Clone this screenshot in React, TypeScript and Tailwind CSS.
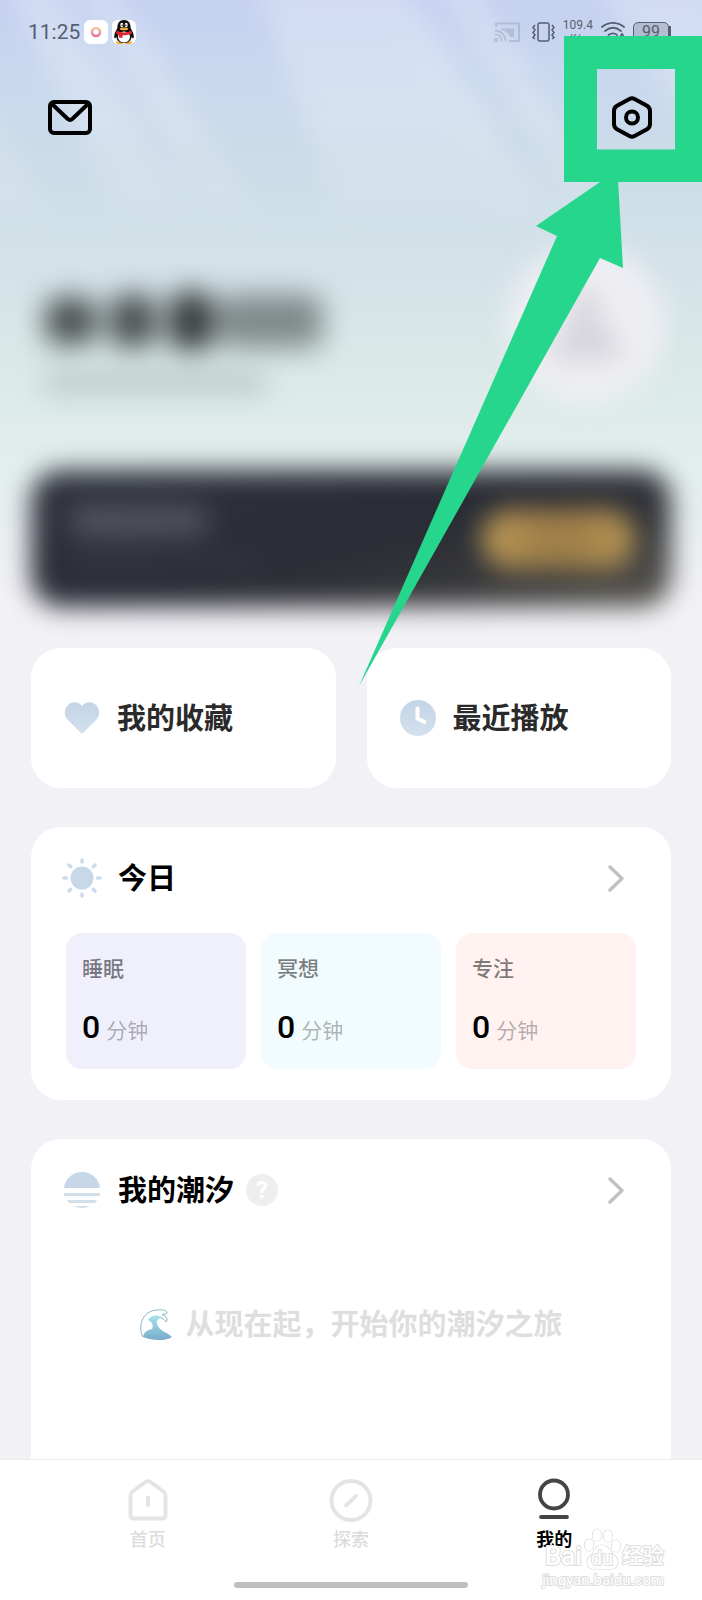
import type { ReactNode } from "react"

const stats = [
  { label: "睡眠", value: 0, className: "bg-[#f0effc]" },
  { label: "冥想", value: 0, className: "bg-[#f2fbfd]" },
  { label: "专注", value: 0, className: "bg-[#fff2f0]" },
]

function LightBeams() {
  return (
    <svg
      className="absolute inset-x-0 top-0 w-full h-[300px]"
      viewBox="0 0 702 300"
      preserveAspectRatio="none"
      aria-hidden="true"
    >
      <defs>
        <filter id="beamBlur" x="-20%" y="-20%" width="140%" height="140%">
          <feGaussianBlur stdDeviation="12" />
        </filter>
        <linearGradient id="beamFade" x1="0" y1="0" x2="0" y2="300" gradientUnits="userSpaceOnUse">
          <stop offset="0" stopColor="#fff" stopOpacity="0.22" />
          <stop offset="0.4" stopColor="#fff" stopOpacity="0.22" />
          <stop offset="0.8" stopColor="#fff" stopOpacity="0" />
        </linearGradient>
      </defs>
      <g fill="url(#beamFade)" filter="url(#beamBlur)">
        <path d="M5 -20H50L235 280H150Z" />
        <path d="M75 -20H108L300 280H245Z" />
        <path d="M255 -20H375L570 280H360Z" />
        <path d="M375 -20H400L600 280H550Z" />
        <path d="M435 -20H470L660 280H620Z" />
        <path d="M590 -20H720V160Z" />
        <path d="M-20 90L80 280H-20Z" />
      </g>
    </svg>
  )
}

function StatusBar() {
  return (
    <div className="relative flex h-16 items-center justify-between pl-7 pr-[31px] text-[#565f70]">
      <div className="flex items-center gap-1">
        <span className="text-[21px] leading-6">11:25</span>
        <span className="flex size-6 items-center justify-center rounded-md bg-white">
          <svg width="12" height="12" viewBox="0 0 12 12" aria-hidden="true">
            <defs>
              <linearGradient id="ring" x1="0" y1="0" x2="0" y2="1">
                <stop offset="0" stopColor="#f6c9a4" />
                <stop offset="1" stopColor="#e8709a" />
              </linearGradient>
            </defs>
            <circle cx="6" cy="6" r="4" fill="none" stroke="url(#ring)" strokeWidth="2.6" />
          </svg>
        </span>
        <span className="flex size-6 items-center justify-center rounded-md bg-white">
          <svg width="24" height="24" viewBox="0 0 24 24" aria-hidden="true">
            <ellipse cx="8" cy="22.6" rx="4" ry="1.5" fill="#f0ad3c" />
            <ellipse cx="16" cy="22.6" rx="4" ry="1.5" fill="#f0ad3c" />
            <path d="M12 0C7.500 0 5.200 3.200 5.400 8C3.800 11 1.800 14 2.200 17.500C2.400 19 3.600 18 4.400 17C5 21 8 23 12 23S19 21 19.600 17C20.400 18 21.600 19 21.800 17.500C22.200 14 20.200 11 18.600 8C18.800 3.200 16.500 0 12 0Z" fill="#111" />
            <ellipse cx="12" cy="17" rx="6" ry="5.500" fill="#fff" />
            <ellipse cx="9.800" cy="5" rx="1.500" ry="2.200" fill="#fff" />
            <ellipse cx="14.200" cy="5" rx="1.500" ry="2.200" fill="#fff" />
            <circle cx="10.200" cy="5.300" r=".7" />
            <circle cx="13.800" cy="5.300" r=".7" />
            <ellipse cx="12" cy="8.900" rx="4.200" ry="1.400" fill="#f0ad3c" />
            <path d="M4.600 10.500C9 13 15 13 19.400 10.500L20 13.500C17 15 14 15.300 10.500 15.200V18L7 17.500V14.800L4 13.500Z" fill="#df2430" />
          </svg>
        </span>
      </div>
      <div className="flex items-center">
        <svg className="mr-3 opacity-20" width="26" height="20" viewBox="0 0 26 20" fill="none" stroke="currentColor" strokeWidth="2" aria-hidden="true">
          <path d="M2 5V1.500H25V19H15" />
          <path d="M7 6.500H20V15H16C14 11 11 8.500 7 7.500Z" fill="currentColor" stroke="none" />
          <path d="M1 8.500C7 8.500 11.500 13 11.500 19M1 12.500C5 12.500 7.500 15 7.500 19M1 17H3V19H1Z" />
        </svg>
        <svg className="mr-2" width="23" height="20" viewBox="0 0 23 20" fill="none" stroke="currentColor" strokeWidth="1.500" aria-hidden="true">
          <rect x="6" y="1" width="11" height="18" rx="2" />
          <path d="M3 3L1 5.500L3 8L1 10.500L3 13L1 15.500L3 17M20 3L22 5.500L20 8L22 10.500L20 13L22 15.500L20 17" />
        </svg>
        <span className="mr-2 flex flex-col items-center text-xs leading-[14px]">
          <span>109.4</span>
          <span className="text-[10px]">K/s</span>
        </span>
        <svg className="mr-2" width="24" height="20" viewBox="0 0 24 20" fill="none" stroke="currentColor" strokeWidth="1.800" strokeLinecap="round" aria-hidden="true">
          <path d="M1 5C7.500 -.5 16.500 -.5 23 5M4 9C9 5 15 5 20 9M7.500 13C10.500 11 13.500 11 16 13" />
          <path d="M21 12L23 15H19Z" fill="currentColor" />
        </svg>
        <span className="flex items-center">
          <span className="flex h-[21px] w-9 items-center justify-center rounded-[5px] border border-current bg-[#565f70]/25 text-base leading-4">
            99
          </span>
          <span className="h-3 w-0.5 bg-current" />
        </span>
      </div>
    </div>
  )
}

function Chevron() {
  return (
    <svg width="16" height="27" viewBox="0 0 16 27" fill="none" stroke="#c1c1c1" strokeWidth="3.400" strokeLinecap="round" strokeLinejoin="round" aria-hidden="true">
      <path d="M2 2L14 13.500L2 25" />
    </svg>
  )
}

function Shortcut({ icon, children }: { icon: ReactNode; children: ReactNode }) {
  return (
    <button type="button" className="flex h-[140px] flex-1 items-center rounded-[30px] bg-white pl-8 text-[#2a2a2a]">
      {icon}
      <span className="ml-4 pt-0.5 text-[29px] leading-10 font-bold">{children}</span>
    </button>
  )
}

function CardHeader({ icon, title, extra }: { icon: ReactNode; title: string; extra?: ReactNode }) {
  return (
    <div className="flex h-[102px] items-center pl-[31px] pr-[47px]">
      {icon}
      <h2 className="ml-4 pt-0.5 text-[29px] leading-10 font-bold text-black">{title}</h2>
      {extra}
      <button type="button" aria-label={`查看${title}`} className="ml-auto">
        <Chevron />
      </button>
    </div>
  )
}

function NavItem({ icon, label, active }: { icon: ReactNode; label: string; active?: boolean }) {
  return (
    <a
      href="#"
      aria-current={active ? "page" : undefined}
      className={`flex flex-1 flex-col items-center ${active ? "text-[#444]" : "text-[#e4e4e4]"}`}
    >
      {icon}
      <span className={`mt-1 text-lg leading-7 ${active ? "font-bold text-black" : "font-medium text-[#dcdcdc]"}`}>{label}</span>
    </a>
  )
}

// green box and arrow that point at the settings button
function SettingsPointer() {
  return (
    <svg className="pointer-events-none absolute right-0 top-9" width="343" height="650" viewBox="359 36 343 650" fill="#26d68c" aria-hidden="true">
      <path fillRule="evenodd" d="M564 36H702V182H564ZM597 69V149.500H675V69Z" />
      <path d="M600 182L536 226L557 236L359 686L600 258L623 268L618 180Z" />
    </svg>
  )
}

function Watermark() {
  return (
    <div className="pointer-events-none absolute bottom-3 right-[38px] flex flex-col items-end text-white [-webkit-text-stroke:2px_#dedede] [paint-order:stroke_fill]">
      <div className="flex items-end">
        <span className="text-[26px] leading-7 font-medium">Bai</span>
        <span className="relative flex h-[42px] w-10 items-end justify-center">
          <svg className="absolute inset-0" width="40" height="42" viewBox="0 0 40 42" fill="#fff" stroke="#d4d4d4" strokeWidth="1.200" aria-hidden="true">
            <ellipse cx="7" cy="17" rx="4.500" ry="6" />
            <ellipse cx="15" cy="7" rx="4.500" ry="6" />
            <ellipse cx="26" cy="8" rx="4.500" ry="6" />
            <ellipse cx="34" cy="18" rx="4.500" ry="6" />
            <path d="M20 17C13 17 13 24 8 28C3 33 5 41 12 41H29C36 41 38 33 33 28C28 24 27 17 20 17Z" />
          </svg>
          <span className="relative text-xl leading-6">du</span>
        </span>
        <span className="text-[21px] leading-7 font-medium">经验</span>
      </div>
      <span className="mt-0.5 text-[15px] leading-4">jingyan.baidu.com</span>
    </div>
  )
}

export default function App() {
  return (
    <div className="relative flex min-h-screen flex-col overflow-hidden bg-[#f2f1f6] font-[Roboto,'Noto_Sans_CJK_SC',sans-serif]">
      <div className="absolute inset-x-0 top-0 h-[620px] bg-[linear-gradient(to_bottom,#c5d1f0_0px,#c9d8ee_80px,#cbdbe9_150px,#d0e0e8_220px,#d5e3e9_280px,#d8e7e7_340px,#e0edeb_440px,#f2f1f6_600px)]" />
      <LightBeams />

      <StatusBar />

      <header className="relative flex h-[106px] items-center justify-between pl-12 pr-[50px]">
        <button type="button" aria-label="消息">
          <svg width="44" height="35" viewBox="0 0 44 35" fill="none" stroke="#000" strokeWidth="4" strokeLinejoin="round" aria-hidden="true">
            <rect x="2" y="2" width="40" height="31" rx="4" />
            <path d="M4 4L19.500 18.800Q22 21 24.500 18.800L40 4" />
          </svg>
        </button>
        <button type="button" aria-label="设置">
          <svg width="40" height="43" viewBox="0 0 40 43" fill="none" stroke="#000" strokeWidth="4" strokeLinejoin="round" aria-hidden="true">
            <path d="M17.500 2.900Q20 1.500 22.500 2.900L35 9.800Q38 11.500 38 15V28Q38 31.500 35 33.200L22.500 40.100Q20 41.500 17.500 40.100L5 33.200Q2 31.500 2 28V15Q2 11.500 5 9.800Z" />
            <circle cx="20" cy="21.500" r="6" />
          </svg>
        </button>
      </header>

      <section className="relative mt-[75px] flex h-40 items-center justify-between pl-[45px] pr-9" aria-hidden="true">
        <div className="mt-9 flex flex-col gap-5">
          <div className="flex items-center gap-3 blur-[14px]">
            <span className="h-12 w-[52px] rounded-2xl bg-black/65" />
            <span className="h-[54px] w-12 rounded-2xl bg-black/65" />
            <span className="h-[60px] w-11 rounded-2xl bg-black/75" />
            <span className="-ml-2 h-[54px] w-[106px] rounded-2xl bg-black/40" />
          </div>
          <div className="h-6 w-[220px] bg-[#889894]/35 blur-[13px]" />
        </div>
        <div className="flex size-40 items-center justify-center rounded-full bg-[#eeeef3] blur-[13px]">
          <svg width="80" height="80" viewBox="0 0 80 80" className="blur-[4px]">
            <path d="M40 4C56 4 56 24 50 36C60 44 74 54 76 74H4C6 54 20 44 30 36C24 24 24 4 40 4Z" fill="#d3d3da" />
          </svg>
        </div>
      </section>

      <section
        className="relative mx-[31px] mt-[65px] flex h-[137px] items-center justify-between rounded-[30px] bg-[linear-gradient(165deg,#30333e_0%,#292c35_50%,#35363a_72%,#5a5850_100%)] pl-10 pr-9 blur-[13px]"
        aria-hidden="true"
      >
        <div className="flex flex-col gap-5">
          <div className="h-7 w-[136px] rounded-lg bg-white/20 blur-[6px]" />
          <div className="h-4 w-[190px] bg-white/5 blur-[4px]" />
        </div>
        <div className="h-[60px] w-[154px] rounded-full bg-[linear-gradient(to_right,#bd9a57,#a08049_40%,#a08049_60%,#b99655)]" />
      </section>

      <div className="relative mx-[31px] mt-[41px] flex gap-[31px]">
        <Shortcut
          icon={
            <svg width="38" height="38" viewBox="0 0 38 38" aria-hidden="true">
              <defs>
                <linearGradient id="pale" x1="0" y1="0" x2="0" y2="1">
                  <stop offset="0" stopColor="#c3d4e7" />
                  <stop offset="1" stopColor="#d3e1ec" />
                </linearGradient>
              </defs>
              <path d="M19 35L4.500 20.500C1 17 .8 10 5 6C9 2.200 15.500 2.500 19 7C22.500 2.500 29 2.200 33 6C37.200 10 37 17 33.500 20.500Z" fill="url(#pale)" />
            </svg>
          }
        >
          我的收藏
        </Shortcut>
        <Shortcut
          icon={
            <svg width="38" height="38" viewBox="0 0 38 38" fill="none" aria-hidden="true">
              <circle cx="19" cy="19" r="18" fill="url(#pale)" />
              <path d="M18.500 9.500V19.500L25.500 23" stroke="#fff" strokeWidth="4" strokeLinecap="round" strokeLinejoin="round" />
            </svg>
          }
        >
          最近播放
        </Shortcut>
      </div>

      <section className="relative mx-[31px] mt-[39px] rounded-[30px] bg-white pb-[31px]">
        <CardHeader
          title="今日"
          icon={
            <svg width="40" height="40" viewBox="0 0 40 40" fill="#c7d8e8" stroke="#cddceb" strokeWidth="3.500" strokeLinecap="round" aria-hidden="true">
              <circle cx="20" cy="20" r="11.500" stroke="none" />
              <path d="M20 2V4M20 36V38M2 20H4.500M35.500 20H38M7 7L8.700 8.700M31.300 31.300L33 33M33 7L31.300 8.700M8.700 31.300L7 33" />
            </svg>
          }
        />
        <div className="mt-1 grid grid-cols-3 gap-[15px] px-[35px]">
          {stats.map((item) => (
            <div key={item.label} className={`h-[136px] rounded-2xl px-4 pt-5 ${item.className}`}>
              <p className="text-[21px] leading-8 font-medium text-black/50">{item.label}</p>
              <p className="mt-6 flex items-baseline gap-1.5 leading-9">
                <span className="text-[32px] font-medium text-black">{item.value}</span>
                <span className="text-[21px] text-black/30">分钟</span>
              </p>
            </div>
          ))}
        </div>
      </section>

      <section className="relative mx-[31px] mt-[39px] flex-1 rounded-t-[30px] bg-white">
        <CardHeader
          title="我的潮汐"
          icon={
            <svg width="40" height="40" viewBox="0 0 40 40" fill="#c7d7e8" aria-hidden="true">
              <path d="M2 18C3 9 10 2 20 2S37 9 38 18Z" />
              <path d="M2 23H38L37.500 26H2.500ZM5 30H35L33 33H7ZM12 36H28Q20 40 12 36Z" fill="#d0dfea" />
            </svg>
          }
          extra={
            <button type="button" aria-label="说明" className="ml-3 flex size-8 items-center justify-center rounded-full bg-[#eee] text-2xl leading-8 font-bold text-white">
              ?
            </button>
          }
        />
        <div className="mt-16 flex items-center justify-center gap-3">
          <svg width="34" height="32" viewBox="0 0 34 32" aria-hidden="true">
            <defs>
              <linearGradient id="wave" x1="0" y1="0" x2="0" y2="1">
                <stop offset="0" stopColor="#a6e2ef" />
                <stop offset="1" stopColor="#78abc9" />
              </linearGradient>
            </defs>
            <path d="M4 28C-1 19 2 2 18 1C22 .5 27 1 28 3C29 6 24 4 23 6C28 6 29 11 27 13C23 8 19 7 17 10" fill="#fff" stroke="#86b4c8" />
            <path d="M9 11C13 5 21 6 24 9C19 9 17 12 18 15C20 22 28 23 33 28C26 33 12 31 4 28C5 23 8 21 13 20C15 16 13 13 9 11Z" fill="url(#wave)" />
          </svg>
          <p className="text-[29px] leading-10 font-bold text-[#dedede]">从现在起，开始你的潮汐之旅</p>
        </div>
      </section>

      <nav className="relative flex h-[141px] flex-col border-t border-[#ececec] bg-white px-[46px] pt-[18px]">
        <div className="flex">
          <NavItem
            label="首页"
            icon={
              <svg width="44" height="44" viewBox="0 0 44 44" fill="none" stroke="currentColor" strokeWidth="3.800" strokeLinejoin="round" strokeLinecap="round" aria-hidden="true">
                <path d="M19.500 4Q22 2.200 24.500 4L37.500 13.500Q39.500 15 39.500 17.500V37Q39.500 40.500 36 40.500H8Q4.500 40.500 4.500 37V17.500Q4.500 15 6.500 13.500Z" />
                <path d="M22 19.500V27" />
              </svg>
            }
          />
          <NavItem
            label="探索"
            icon={
              <svg width="44" height="44" viewBox="0 0 44 44" fill="none" stroke="currentColor" strokeWidth="3.800" strokeLinecap="round" aria-hidden="true">
                <circle cx="22" cy="22.500" r="19.500" />
                <path d="M17 27.500L27 18" />
              </svg>
            }
          />
          <NavItem
            active
            label="我的"
            icon={
              <svg width="44" height="44" viewBox="0 0 44 44" fill="none" stroke="currentColor" strokeWidth="3.800" strokeLinecap="round" aria-hidden="true">
                <circle cx="22" cy="16.500" r="14" />
                <path d="M9 39H35" />
              </svg>
            }
          />
        </div>
        <div className="mx-auto mt-7 h-1.5 w-[234px] rounded-full bg-[#bfbfbf]" />
        <Watermark />
      </nav>

      <SettingsPointer />
    </div>
  )
}
